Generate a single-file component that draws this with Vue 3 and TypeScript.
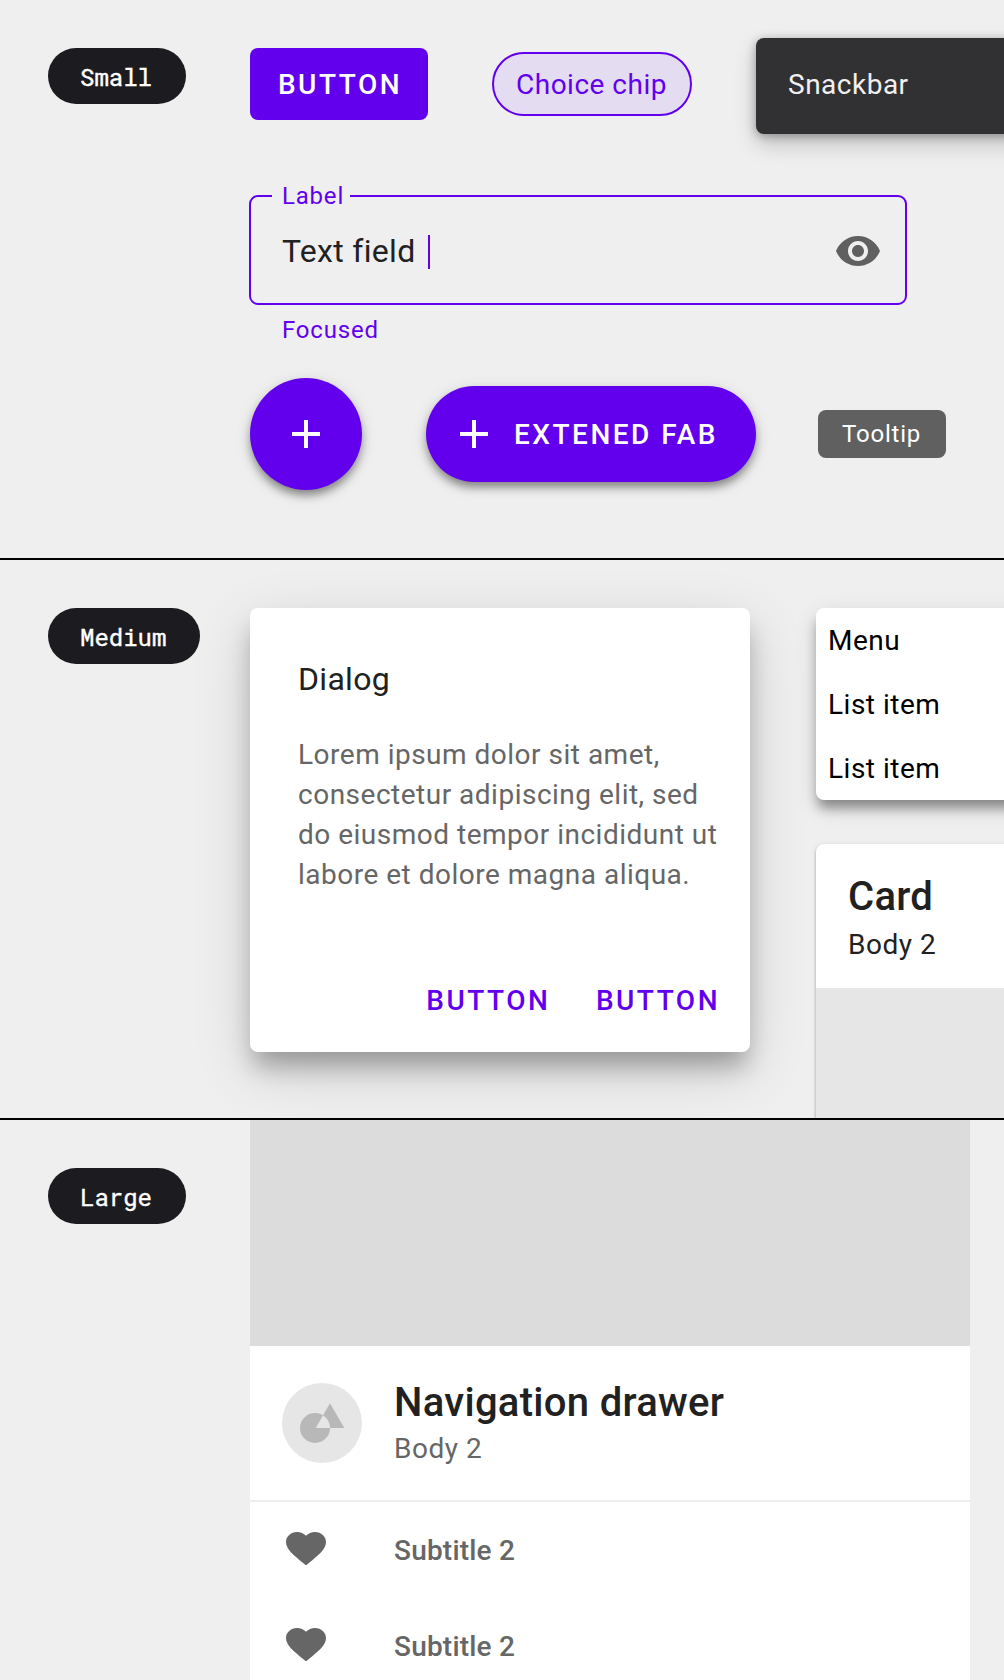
<script setup lang="ts">
const menuItems: string[] = ['Menu', 'List item', 'List item']
const drawerItems: string[] = ['Subtitle 2', 'Subtitle 2']
</script>

<template>
  <main class="page">
    <section class="band">
      <div class="side"><span class="tag">Small</span></div>
      <div class="small">
        <div class="row row-top">
          <button class="btn">BUTTON</button>
          <span class="chip">Choice chip</span>
          <div class="snackbar">Snackbar</div>
        </div>
        <fieldset class="field">
          <legend>Label</legend>
          <span class="value">Text field</span>
          <i class="caret"></i>
          <svg class="eye" viewBox="0 0 24 24" width="48" height="48">
            <path fill="#606060" d="M12 4.5C7 4.5 2.73 7.61 1 12c1.73 4.39 6 7.5 11 7.5s9.27-3.11 11-7.5c-1.73-4.39-6-7.5-11-7.5zM12 17c-2.76 0-5-2.24-5-5s2.24-5 5-5 5 2.24 5 5-2.24 5-5 5zm0-8c-1.66 0-3 1.34-3 3s1.34 3 3 3 3-1.34 3-3-1.34-3-3-3z" />
          </svg>
        </fieldset>
        <p class="helper">Focused</p>
        <div class="row row-fab">
          <button class="fab" aria-label="Add">
            <svg viewBox="0 0 28 28" width="28" height="28"><path d="M12 0h4v12h12v4H16v12h-4V16H0v-4h12z" fill="#fff" /></svg>
          </button>
          <button class="fab-ext">
            <svg viewBox="0 0 28 28" width="28" height="28"><path d="M12 0h4v12h12v4H16v12h-4V16H0v-4h12z" fill="#fff" /></svg>
            <span>EXTENED FAB</span>
          </button>
          <span class="tooltip">Tooltip</span>
        </div>
      </div>
    </section>

    <section class="band">
      <div class="side"><span class="tag">Medium</span></div>
      <div class="medium">
        <article class="dialog">
          <h2>Dialog</h2>
          <p>Lorem ipsum dolor sit amet,<br />consectetur adipiscing elit, sed<br />do eiusmod tempor incididunt ut<br />labore et dolore magna aliqua.</p>
          <div class="actions"><button>BUTTON</button><button>BUTTON</button></div>
        </article>
        <div class="stack">
          <ul class="menu">
            <li v-for="(item, i) in menuItems" :key="i">{{ item }}</li>
          </ul>
          <article class="card">
            <div class="card-head">
              <h3>Card</h3>
              <p>Body 2</p>
            </div>
            <div class="card-media"></div>
          </article>
        </div>
      </div>
    </section>

    <section class="band last">
      <div class="side"><span class="tag">Large</span></div>
      <nav class="drawer">
        <div class="cover"></div>
        <header>
          <svg class="avatar" viewBox="0 0 80 80" width="80" height="80">
            <circle cx="40" cy="40" r="40" fill="#e6e6e6" />
            <path fill="#b8b8b8" fill-rule="evenodd" d="M18 45a15 15 0 1 0 30 0a15 15 0 1 0-30 0zM48 20.3L62.3 45H33.7z" />
          </svg>
          <div>
            <h3>Navigation drawer</h3>
            <p>Body 2</p>
          </div>
        </header>
        <div v-for="(item, i) in drawerItems" :key="i" class="item">
          <svg viewBox="2 3 20 18.35" width="40" height="33.4" preserveAspectRatio="none">
            <path fill="#666" d="M12 21.35l-1.45-1.32C5.4 15.36 2 12.28 2 8.5 2 5.42 4.42 3 7.5 3c1.74 0 3.41.81 4.5 2.09C13.09 3.81 14.76 3 16.5 3 19.58 3 22 5.42 22 8.5c0 3.78-3.4 6.86-8.55 11.54L12 21.35z" />
          </svg>
          <span>{{ item }}</span>
        </div>
      </nav>
    </section>
  </main>
</template>

<style>
body {
  background: #efefef;
}
</style>

<style scoped>
* {
  box-sizing: border-box;
  margin: 0;
  padding: 0;
}
.page {
  width: 1004px;
  height: 1680px;
  overflow: hidden;
  background: #efefef;
  font-family: Roboto, 'Liberation Sans', sans-serif;
  font-size: 28px;
  color: #212121;
}
button {
  border: 0;
  background: none;
  font: inherit;
  font-weight: 500;
}
.band {
  display: flex;
  width: 1004px;
  height: 560px;
  overflow: hidden;
  border-bottom: 2px solid #000;
}
.band.last {
  border-bottom: 0;
}
.side {
  flex: 0 0 250px;
  padding: 48px 0 0 48px;
}
.tag {
  display: inline-block;
  height: 56px;
  padding: 0 34px 0 32px;
  border-radius: 28px;
  background: #1c1b20;
  color: #fff;
  font-family: 'Roboto Mono', 'Liberation Mono', monospace;
  font-size: 24px;
  line-height: 59px;
  white-space: nowrap;
  -webkit-text-stroke: 0.4px #fff;
}
.small {
  flex: 1;
  min-width: 0;
}
.row {
  display: flex;
}
.row-top {
  padding-top: 38px;
  height: 195px;
}
.btn {
  flex: none;
  width: 178px;
  height: 72px;
  margin-top: 10px;
  border-radius: 8px;
  background: #6200ee;
  color: #fff;
  letter-spacing: 2.5px;
  text-indent: 2px;
}
.chip {
  flex: none;
  width: 200px;
  height: 64px;
  margin: 14px 0 0 64px;
  border: 2px solid #6200ee;
  border-radius: 32px;
  background: #e4dcf0;
  color: #6200ee;
  line-height: 61px;
  padding-left: 22px;
  letter-spacing: 0.5px;
}
.snackbar {
  flex: none;
  width: 400px;
  height: 96px;
  margin-left: 64px;
  padding-left: 32px;
  border-radius: 8px;
  background: #313133;
  color: #f2eff0;
  line-height: 94px;
  letter-spacing: 0.5px;
  box-shadow: 0 2px 10px rgba(0, 0, 0, 0.3), 0 10px 22px rgba(0, 0, 0, 0.2);
}
.field {
  display: flex;
  align-items: center;
  width: 658px;
  height: 122px;
  margin: -12px 0 0 -1px;
  padding-left: 31px;
  border: 2px solid #6200ee;
  border-radius: 9px;
}
.field legend {
  width: 78px;
  height: 26px;
  margin-left: -10px;
  padding-left: 10px;
  color: #6200ee;
  font-size: 24px;
  line-height: 26px;
  letter-spacing: 0.8px;
}
.value {
  font-size: 32px;
  letter-spacing: 0.3px;
  line-height: 40px;
  width: 146px;
  white-space: nowrap;
  margin-top: -10px;
}
.caret {
  width: 2px;
  height: 34px;
  background: #6200ee;
  margin-top: -8px;
}
.eye {
  margin: -10px 23px 0 auto;
}
.helper {
  height: 73px;
  padding: 11px 0 0 32px;
  color: #6200ee;
  font-size: 24px;
  line-height: 28px;
  letter-spacing: 0.8px;
}
.row-fab {
  align-items: center;
  height: 112px;
}
.fab,
.fab-ext {
  display: flex;
  align-items: center;
  background: #6200ee;
  color: #fff;
  box-shadow: 0 6px 9px -1px rgba(0, 0, 0, 0.38), 0 4px 16px rgba(0, 0, 0, 0.14);
}
.fab {
  justify-content: center;
  width: 112px;
  height: 112px;
  border-radius: 50%;
}
.fab-ext {
  width: 330px;
  height: 96px;
  margin-left: 64px;
  padding-left: 34px;
  border-radius: 48px;
  gap: 26px;
  letter-spacing: 2.5px;
  white-space: nowrap;
}
.tooltip {
  width: 128px;
  height: 48px;
  margin-left: 62px;
  padding-left: 24px;
  border-radius: 8px;
  background: #606060;
  color: #fff;
  font-size: 24px;
  line-height: 49px;
  letter-spacing: 0.8px;
}
.medium {
  display: flex;
  flex: 1;
  min-width: 0;
  padding-top: 48px;
}
.dialog {
  flex: none;
  width: 500px;
  height: 444px;
  padding: 50px 0 0 48px;
  border-radius: 8px;
  background: #fff;
  box-shadow: 0 18px 24px -4px rgba(0, 0, 0, 0.29), 0 18px 60px rgba(0, 0, 0, 0.14);
}
.dialog h2 {
  font-size: 32px;
  font-weight: 400;
  line-height: 42px;
  letter-spacing: 0.3px;
}
.dialog p {
  margin-top: 35px;
  color: #666;
  line-height: 40px;
  letter-spacing: 0.5px;
  white-space: nowrap;
}
.actions {
  display: flex;
  gap: 45.5px;
  justify-content: flex-end;
  margin: 86px 30px 0 0;
}
.actions button {
  color: #6200ee;
  line-height: 40px;
  letter-spacing: 2.5px;
}
.stack {
  flex: none;
  width: 400px;
  margin-left: 66px;
}
.menu {
  height: 192px;
  list-style: none;
  padding-left: 12px;
  border-radius: 8px;
  background: #fff;
  color: #000;
  letter-spacing: 0.5px;
  box-shadow: 0 10px 12px -2px rgba(0, 0, 0, 0.38), 0 7px 24px rgba(0, 0, 0, 0.12);
}
.menu li {
  height: 64px;
  line-height: 66px;
}
.card {
  margin-top: 44px;
  height: 320px;
  border-radius: 8px;
  overflow: hidden;
  background: #fff;
  box-shadow: 0 2px 3px rgba(0, 0, 0, 0.28), 0 1px 5px rgba(0, 0, 0, 0.1);
}
.card-head {
  height: 144px;
  padding: 29px 0 0 32px;
}
h3 {
  font-size: 40px;
  font-weight: 500;
  line-height: 48px;
  letter-spacing: 0.3px;
}
.card-head p {
  line-height: 48px;
  letter-spacing: 0.5px;
}
.card-media {
  height: 176px;
  background: #e6e6e6;
}
.drawer {
  flex: none;
  width: 720px;
  background: #fff;
}
.cover {
  height: 226px;
  background: #dcdcdc;
}
.drawer header {
  display: flex;
  gap: 32px;
  height: 156px;
  padding: 37px 0 0 32px;
  border-bottom: 2px solid #eee;
}
.drawer header div {
  margin-top: -4px;
}
.drawer header p {
  color: #666;
  line-height: 44px;
  letter-spacing: 0.5px;
}
.item {
  display: flex;
  height: 96px;
  padding: 30px 0 0 36px;
  gap: 68px;
}
.item span {
  color: #666;
  font-weight: 500;
  line-height: 38px;
  letter-spacing: 0.2px;
}
</style>
